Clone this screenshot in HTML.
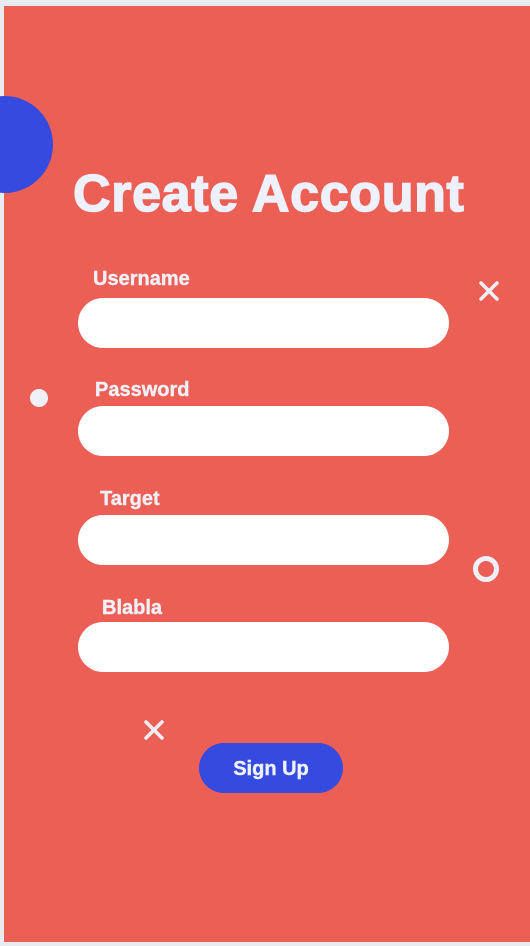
<!DOCTYPE html>
<html><head><style>
body{margin:0;width:530px;height:946px;background:#e8ecf0;position:relative;overflow:hidden;font-family:"Liberation Sans",sans-serif;}
.panel{position:absolute;left:4px;top:6px;width:526px;height:936px;background:#ec5f55;overflow:hidden;}
.a{position:absolute;}
.lbl{position:absolute;color:#f0f0f8;font-weight:bold;font-size:20px;letter-spacing:0px;-webkit-text-stroke:0.4px #f0f0f8;}
.inp{position:absolute;left:78px;width:371px;height:50px;border-radius:25px;background:#fff;}
</style></head><body>
<div class="panel"></div>
<div class="a" style="left:-44px;top:96px;width:97px;height:97px;border-radius:50%;background:#354be0"></div>
<div class="a" style="left:73px;top:164px;font-size:52px;font-weight:bold;color:#eef1fb;letter-spacing:0.65px;white-space:nowrap;-webkit-text-stroke:1.5px #eef1fb">Create Account</div>
<div class="lbl" style="left:93px;top:268px">Username</div>
<div class="inp" style="top:298px"></div>
<div class="lbl" style="left:95px;top:379px">Password</div>
<div class="inp" style="top:406px"></div>
<div class="lbl" style="left:100px;top:488px">Target</div>
<div class="inp" style="top:515px"></div>
<div class="lbl" style="left:102px;top:597px">Blabla</div>
<div class="inp" style="top:622px"></div>
<svg class="a" style="left:478px;top:280px" width="22" height="22"><path d="M3 3L19 19M19 3L3 19" stroke="#f0f0f8" stroke-width="3.5" stroke-linecap="round"/></svg>
<svg class="a" style="left:143px;top:719px" width="22" height="22"><path d="M3 3L19 19M19 3L3 19" stroke="#f0f0f8" stroke-width="3.5" stroke-linecap="round"/></svg>
<div class="a" style="left:30px;top:389px;width:18px;height:18px;border-radius:50%;background:#f0f0f8"></div>
<div class="a" style="left:473px;top:556px;width:16px;height:16px;border-radius:50%;border:5px solid #f0f0f8"></div>
<div class="a" style="left:199px;top:743px;width:144px;height:50px;border-radius:25px;background:#354be0;color:#eef1fb;font-weight:bold;font-size:20px;line-height:52px;text-align:center;letter-spacing:0px;-webkit-text-stroke:0.4px #eef1fb">Sign Up</div>
</body></html>
